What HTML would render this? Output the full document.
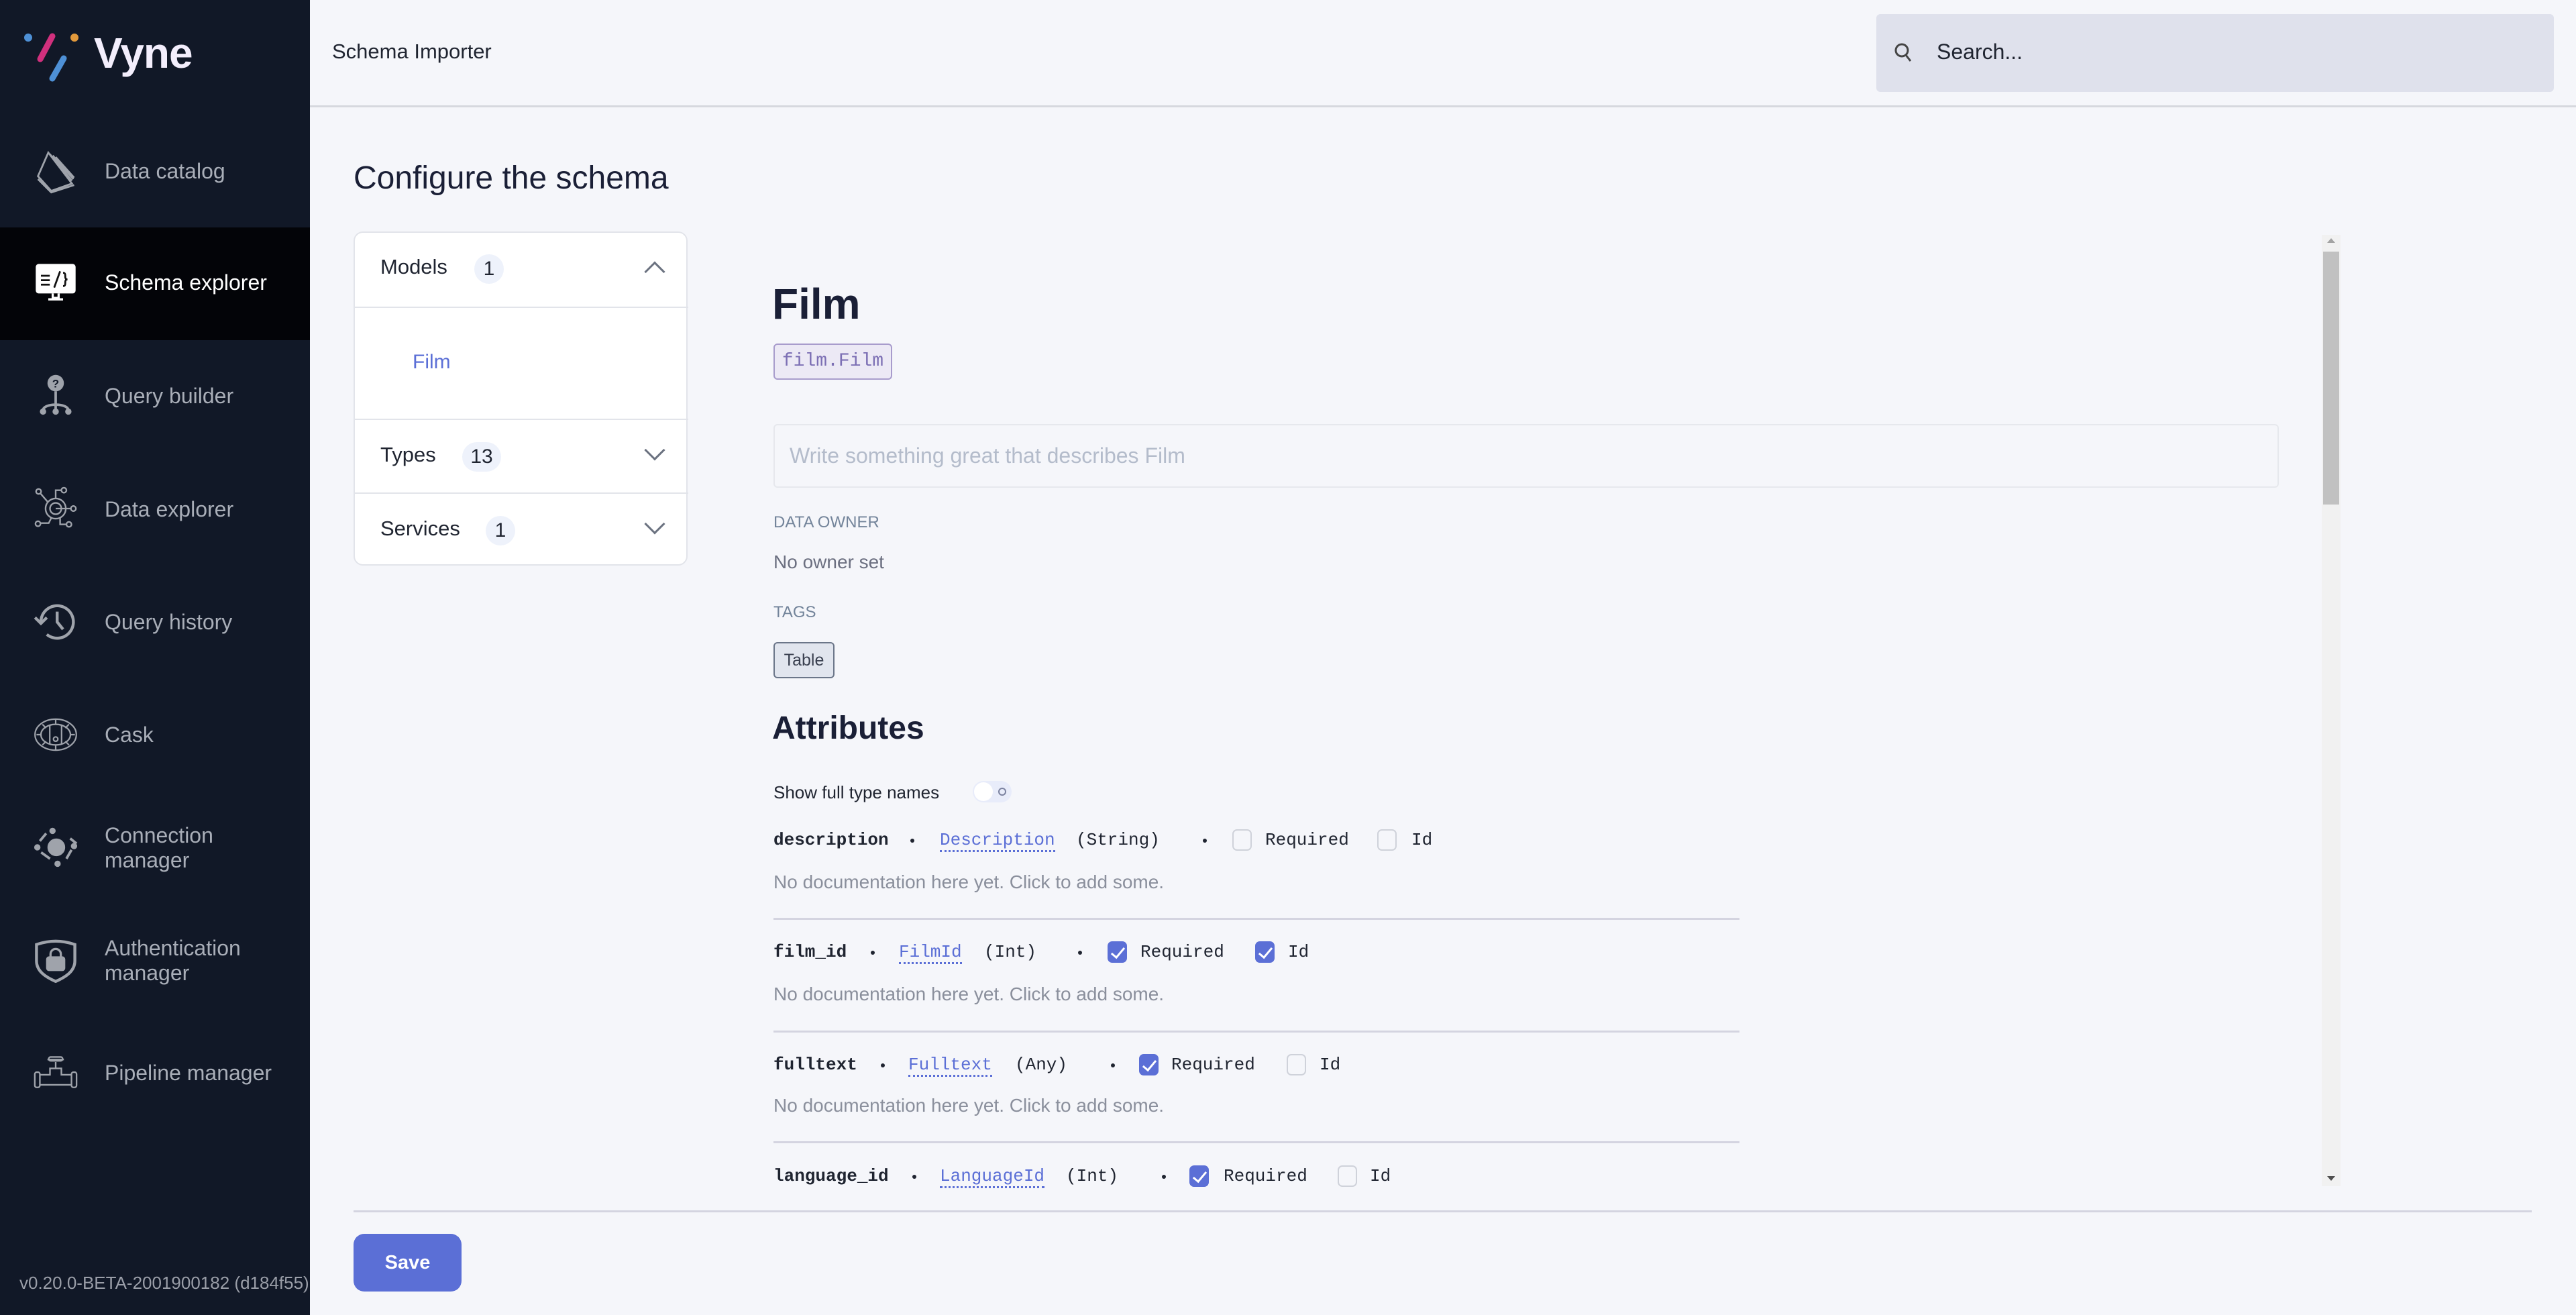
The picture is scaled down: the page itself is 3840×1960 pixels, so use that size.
<!DOCTYPE html>
<html><head><meta charset="utf-8"><style>
*{margin:0;padding:0;box-sizing:border-box}
body{width:3840px;height:1960px;background:#f5f6fa;font-family:"Liberation Sans",sans-serif;position:relative;overflow:hidden}
.abs{position:absolute}
#side{left:0;top:0;width:462px;height:1960px;background:#111827;overflow:hidden}
.nav{position:absolute;left:0;width:462px;height:168px}
.nav .t{position:absolute;left:156px;color:#a9aeb8;font-size:32px;line-height:37px}
.nav svg{position:absolute;left:50px;width:66px;height:66px}
.mono{font-family:"Liberation Mono",monospace}
.m{position:absolute;font-family:"Liberation Mono",monospace;font-size:26px;color:#1f2430;line-height:30px}
.lnk{color:#5b6fd6;border-bottom:3px dotted #5b6fd6}
.dot{position:absolute;width:6px;height:6px;border-radius:3px;background:#1f2430}
.cb{position:absolute;width:29px;height:32px;border-radius:7px;border:2px solid #cfd2da;background:#f5f6fa}
.cb.on{background:#5b6fd6;border-color:#5b6fd6}
.cb.on::after{content:"";position:absolute;left:8px;top:3px;width:8px;height:17px;border:solid #fff;border-width:0 3px 3px 0;transform:rotate(40deg)}
.doc{position:absolute;left:1153px;font-size:28px;color:#8a8f9c;line-height:32px}
.sep{position:absolute;left:1153px;width:1440px;height:3px;background:#d4d4e0}
.acc{position:absolute;left:0;width:497px;border-top:2px solid #e2e4ea}
.acc .l{position:absolute;left:38px;font-size:31px;color:#1f2430}
.badge{position:absolute;height:44px;border-radius:22px;background:#eef2fb;font-size:30px;color:#1f2430;text-align:center;line-height:44px}
.chev{position:absolute;left:436px;width:22px;height:22px;border:solid #6b7280;border-width:0 3px 3px 0}
</style></head><body>
<div id="side" class="abs">
  <svg class="abs" style="left:30px;top:40px" width="90" height="90" viewBox="30 40 90 90">
    <circle cx="42" cy="56" r="6" fill="#4e90d6"/>
    <circle cx="111" cy="56" r="6" fill="#e39a3c"/>
    <line x1="78" y1="54" x2="60" y2="88" stroke="#d1307d" stroke-width="9" stroke-linecap="round"/>
    <line x1="95" y1="87" x2="78" y2="117" stroke="#4e90d6" stroke-width="9" stroke-linecap="round"/>
  </svg>
  <div class="abs" style="left:140px;top:42px;font-size:64px;font-weight:bold;color:#f3eefc;letter-spacing:-1px">Vyne</div>

  <div class="nav" style="top:171px">
    <svg style="top:52px" viewBox="0 0 60 60" fill="none" stroke="#9fa3ab" stroke-width="2.5"><path d="M20 4 L6 36 L24 56 L52 46 Z"/><path d="M22 6 L52 42 M26 8 L54 40 M30 10 L55 38"/><path d="M6 40 L24 58 L55 48"/></svg>
    <div class="t" style="top:66px">Data catalog</div></div>
  <div class="nav" style="top:339px;background:#030408">
    <svg style="top:50px" viewBox="0 0 60 60"><rect x="3" y="4" width="54" height="40" rx="4" fill="#fff"/><path d="M10 20h12M10 26h12M10 32h12M28 36l8-22M40 16c3 0 3 2 3 5s1 4 3 4c-2 0-3 1-3 4s0 5-3 5" stroke="#111" stroke-width="2.5" fill="none"/><path d="M26 44v6h8v-6M20 52h20" stroke="#fff" stroke-width="3"/></svg>
    <div class="t" style="top:64px;color:#fff">Schema explorer</div></div>
  <div class="nav" style="top:507px">
    <svg style="top:48px" viewBox="0 0 60 70"><circle cx="30" cy="17" r="13" fill="#9fa3ab"/><text x="30" y="24" font-size="18" font-weight="bold" text-anchor="middle" fill="#111827" font-family="Liberation Sans">?</text><path d="M30 30v30M10 60c0-12 40-12 40 0" stroke="#9fa3ab" stroke-width="4" fill="none"/><circle cx="10" cy="62" r="5" fill="#9fa3ab"/><circle cx="30" cy="62" r="5" fill="#9fa3ab"/><circle cx="50" cy="62" r="5" fill="#9fa3ab"/></svg>
    <div class="t" style="top:65px">Query builder</div></div>
  <div class="nav" style="top:675px">
    <svg style="top:50px" viewBox="0 0 70 70" fill="none" stroke="#9fa3ab" stroke-width="2.5"><circle cx="35" cy="35" r="16"/><circle cx="35" cy="35" r="9"/><path d="M35 35h25M35 19V6h10M22 24L10 10M28 50l-4 8H10M42 50v10h10"/><circle cx="48" cy="6" r="4"/><circle cx="8" cy="8" r="4"/><circle cx="63" cy="35" r="4"/><circle cx="7" cy="59" r="4"/><circle cx="56" cy="60" r="4"/></svg>
    <div class="t" style="top:66px">Data explorer</div></div>
  <div class="nav" style="top:843px">
    <svg style="top:51px" viewBox="0 0 60 60" fill="none" stroke="#9fa3ab" stroke-width="4"><path d="M10 30a22 22 0 1 1 8 17"/><path d="M2 24l8 8 8-8"/><path d="M32 16v14l8 10"/></svg>
    <div class="t" style="top:66px">Query history</div></div>
  <div class="nav" style="top:1011px">
    <svg style="top:51px" viewBox="0 0 60 60" fill="none" stroke="#9fa3ab" stroke-width="2"><ellipse cx="30" cy="30" rx="28" ry="21"/><ellipse cx="30" cy="30" rx="20" ry="14"/><path d="M22 17v26M38 17v26M30 9v6M30 45v6M4 30h6M50 30h6M12 16l5 5M48 16l-5 5M12 44l5-5M48 44l-5-5"/><circle cx="30" cy="36" r="3"/></svg>
    <div class="t" style="top:66px">Cask</div></div>
  <div class="nav" style="top:1179px">
    <svg style="top:50px" viewBox="0 0 70 70" fill="none" stroke="#9fa3ab" stroke-width="4"><path d="M20 14l-10 12M58 22l10 8M60 40l-8 14M12 44l14 10"/><circle cx="36" cy="36" r="12" fill="#9fa3ab"/><circle cx="30" cy="10" r="3" fill="#9fa3ab"/><circle cx="6" cy="36" r="3" fill="#9fa3ab"/><circle cx="64" cy="34" r="3" fill="#9fa3ab"/><circle cx="38" cy="62" r="3" fill="#9fa3ab"/></svg>
    <div class="t" style="top:48px;line-height:37px">Connection<br>manager</div></div>
  <div class="nav" style="top:1347px">
    <svg style="top:52px" viewBox="0 0 60 60" fill="none" stroke="#9fa3ab" stroke-width="4"><path d="M4 8c18-6 34-6 52 0v22c0 14-12 22-26 28C16 52 4 44 4 30z"/><rect x="19" y="26" width="22" height="16" rx="2" fill="#9fa3ab"/><path d="M23 26v-5a7 7 0 0 1 14 0v5" stroke-width="3"/></svg>
    <div class="t" style="top:48px">Authentication<br>manager</div></div>
  <div class="nav" style="top:1515px">
    <svg style="top:52px" viewBox="0 0 70 60" fill="none" stroke="#9fa3ab" stroke-width="2.5"><rect x="2" y="28" width="8" height="24" rx="3"/><rect x="60" y="28" width="8" height="24" rx="3"/><path d="M10 32h16v-10h18v10h16M10 48h50"/><path d="M35 22v-10M22 8h26"/><rect x="24" y="4" width="22" height="6" rx="3"/></svg>
    <div class="t" style="top:66px">Pipeline manager</div></div>
  <div class="abs" style="left:29px;top:1897px;font-size:26px;color:#9a9ea8;white-space:nowrap">v0.20.0-BETA-2001900182 (d184f55)</div>
</div>

<!-- header -->
<div class="abs" style="left:462px;top:157px;width:3378px;height:3px;background:#d6d8de"></div>
<div class="abs" style="left:495px;top:59px;font-size:31px;color:#1f2430">Schema Importer</div>
<div class="abs" style="left:2797px;top:21px;width:1010px;height:116px;background:#dfe1ec;border-radius:6px"></div>
<svg class="abs" style="left:2823px;top:62px" width="30" height="34" viewBox="0 0 30 34" fill="none" stroke="#444" stroke-width="3"><circle cx="12" cy="13" r="9"/><path d="M18 20l7 9"/></svg>
<div class="abs" style="left:2887px;top:59px;font-size:32px;color:#1f2430">Search...</div>

<div class="abs" style="left:527px;top:238px;font-size:48px;color:#1a1f36">Configure the schema</div>

<!-- accordion -->
<div class="abs" style="left:527px;top:345px;width:498px;height:498px;background:#fff;border:2px solid #e2e4ea;border-radius:14px">
  <div class="acc" style="top:0;border-top:none;height:110px"><div class="l" style="top:33px">Models</div><div class="badge" style="left:178px;top:32px;width:44px">1</div><div class="chev" style="top:47px;transform:rotate(-135deg)"></div></div>
  <div class="acc" style="top:110px;height:167px"><div style="position:absolute;left:86px;top:64px;font-size:30px;color:#5b6fd6">Film</div></div>
  <div class="acc" style="top:277px;height:110px"><div class="l" style="top:34px">Types</div><div class="badge" style="left:160px;top:33px;width:58px">13</div><div class="chev" style="top:34px;transform:rotate(45deg)"></div></div>
  <div class="acc" style="top:387px;height:110px"><div class="l" style="top:34px">Services</div><div class="badge" style="left:195px;top:33px;width:44px">1</div><div class="chev" style="top:34px;transform:rotate(45deg)"></div></div>
</div>

<!-- detail -->
<div class="abs" style="left:1151px;top:416px;font-size:64px;font-weight:600;color:#1a1f36">Film</div>
<div class="abs mono" style="left:1153px;top:512px;width:177px;height:54px;background:#ece9f5;border:2px solid #a89ccc;border-radius:6px;color:#7c6fb4;font-size:28px;line-height:50px;text-align:center">film.Film</div>
<div class="abs" style="left:1153px;top:632px;width:2244px;height:95px;border:2px solid #e6e8ed;border-radius:6px;padding-left:22px;line-height:91px;font-size:32px;color:#b4bccb">Write something great that describes Film</div>
<div class="abs" style="left:1153px;top:765px;font-size:24px;color:#73849a">DATA OWNER</div>
<div class="abs" style="left:1153px;top:822px;font-size:28px;color:#6b6f80">No owner set</div>
<div class="abs" style="left:1153px;top:899px;font-size:24px;color:#73849a">TAGS</div>
<div class="abs" style="left:1153px;top:957px;width:91px;height:54px;background:#e1e5ee;border:2px solid #6b7689;border-radius:6px;text-align:center;line-height:50px;font-size:25px;color:#3a4050">Table</div>
<div class="abs" style="left:1151px;top:1058px;font-size:48px;font-weight:600;color:#1a1f36">Attributes</div>
<div class="abs" style="left:1153px;top:1166px;font-size:26px;color:#1f2430">Show full type names</div>
<div class="abs" style="left:1450px;top:1164px;width:58px;height:32px;border-radius:16px;background:#e8ecfa"><div style="position:absolute;left:2px;top:2px;width:28px;height:28px;border-radius:14px;background:#fff"></div><div style="position:absolute;left:38px;top:10px;width:12px;height:12px;border-radius:6px;border:2px solid #7b82a0"></div></div>

<!-- rows -->
<div class="m" style="left:1153px;top:1237px;font-weight:bold">description</div>
<div class="dot" style="left:1357px;top:1250px"></div>
<div class="m lnk" style="left:1401px;top:1237px">Description</div>
<div class="m" style="left:1604px;top:1237px">(String)</div>
<div class="dot" style="left:1793px;top:1250px"></div>
<div class="cb" style="left:1837px;top:1236px"></div>
<div class="m" style="left:1886px;top:1237px">Required</div>
<div class="cb" style="left:2053px;top:1236px"></div>
<div class="m" style="left:2104px;top:1237px">Id</div>
<div class="doc" style="top:1299px">No documentation here yet.  Click to add some.</div>
<div class="sep" style="top:1368px"></div>

<div class="m" style="left:1153px;top:1404px;font-weight:bold">film_id</div>
<div class="dot" style="left:1298px;top:1417px"></div>
<div class="m lnk" style="left:1340px;top:1404px">FilmId</div>
<div class="m" style="left:1467px;top:1404px">(Int)</div>
<div class="dot" style="left:1607px;top:1417px"></div>
<div class="cb on" style="left:1651px;top:1403px"></div>
<div class="m" style="left:1700px;top:1404px">Required</div>
<div class="cb on" style="left:1871px;top:1403px"></div>
<div class="m" style="left:1920px;top:1404px">Id</div>
<div class="doc" style="top:1466px">No documentation here yet.  Click to add some.</div>
<div class="sep" style="top:1536px"></div>

<div class="m" style="left:1153px;top:1572px;font-weight:bold">fulltext</div>
<div class="dot" style="left:1313px;top:1585px"></div>
<div class="m lnk" style="left:1354px;top:1572px">Fulltext</div>
<div class="m" style="left:1513px;top:1572px">(Any)</div>
<div class="dot" style="left:1656px;top:1585px"></div>
<div class="cb on" style="left:1698px;top:1571px"></div>
<div class="m" style="left:1746px;top:1572px">Required</div>
<div class="cb" style="left:1918px;top:1571px"></div>
<div class="m" style="left:1967px;top:1572px">Id</div>
<div class="doc" style="top:1632px">No documentation here yet.  Click to add some.</div>
<div class="sep" style="top:1701px"></div>

<div class="m" style="left:1153px;top:1738px;font-weight:bold">language_id</div>
<div class="dot" style="left:1360px;top:1751px"></div>
<div class="m lnk" style="left:1401px;top:1738px">LanguageId</div>
<div class="m" style="left:1589px;top:1738px">(Int)</div>
<div class="dot" style="left:1732px;top:1751px"></div>
<div class="cb on" style="left:1773px;top:1737px"></div>
<div class="m" style="left:1824px;top:1738px">Required</div>
<div class="cb" style="left:1994px;top:1737px"></div>
<div class="m" style="left:2042px;top:1738px">Id</div>

<!-- scrollbar -->
<div class="abs" style="left:3461px;top:350px;width:28px;height:1418px;background:#f1f1f1"></div>
<div class="abs" style="left:3463px;top:375px;width:24px;height:377px;background:#c1c1c1"></div>
<div class="abs" style="left:3469px;top:355px;width:0;height:0;border-left:6px solid transparent;border-right:6px solid transparent;border-bottom:7px solid #a3a3a3"></div>
<div class="abs" style="left:3469px;top:1753px;width:0;height:0;border-left:6px solid transparent;border-right:6px solid transparent;border-top:7px solid #505050"></div>

<!-- footer -->
<div class="abs" style="left:527px;top:1804px;width:3247px;height:3px;background:#d4d4e0"></div>
<div class="abs" style="left:527px;top:1839px;width:161px;height:86px;background:#5b6fd6;border-radius:16px;color:#fff;font-size:29px;font-weight:600;text-align:center;line-height:86px">Save</div>
</body></html>
